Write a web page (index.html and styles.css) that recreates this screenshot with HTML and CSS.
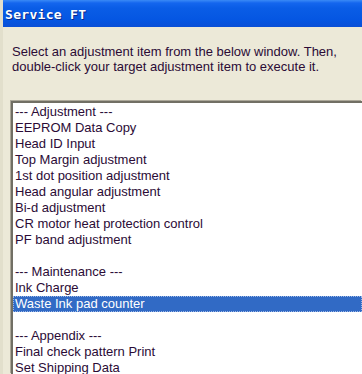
FILE: index.html
```html
<!DOCTYPE html>
<html lang="en">
<head>
  <meta charset="UTF-8" />
  <title>Service FT</title>
  <link rel="stylesheet" href="styles.css">
</head>
<body>

  <div class="titlebar">Service FT</div>

  <div class="content">
    <p class="hint">Select an adjustment item from the below window. Then,<br>double-click your target adjustment item to execute it.</p>

    <ul class="listbox">
      <li>--- Adjustment ---</li>
      <li>EEPROM Data Copy</li>
      <li>Head ID Input</li>
      <li>Top Margin adjustment</li>
      <li>1st dot position adjustment</li>
      <li>Head angular adjustment</li>
      <li>Bi-d adjustment</li>
      <li>CR motor heat protection control</li>
      <li>PF band adjustment</li>
      <li>&nbsp;</li>
      <li>--- Maintenance ---</li>
      <li>Ink Charge</li>
      <li class="selected">Waste Ink pad counter</li>
      <li>&nbsp;</li>
      <li>--- Appendix ---</li>
      <li>Final check pattern Print</li>
      <li>Set Shipping Data</li>
    </ul>
  </div>

</body>
</html>
```

FILE: styles.css
```css
html, body {
  margin: 0;
  padding: 0;
  height: 374px;
  overflow: hidden;
}
body {
  background: #ece9d8;
  font-family: "Liberation Sans", Arial, sans-serif;
  font-size: 13px;
  color: #2b0b36;
  border-left: 3px solid #e2dfcc;
}
.titlebar {
  height: 27px;
  margin-left: -3px;
  padding: 1px 0 0 5px;
  box-sizing: border-box;
  display: flex;
  align-items: center;
  background: linear-gradient(#3a8af6 0, #1466ee 3px, #0a5de6 8px, #0556e2 20px, #0a4fd6 27px);
  color: #fff;
  font-family: "DejaVu Sans Mono", monospace;
  font-weight: bold;
  font-size: 13px;
  letter-spacing: 0.3px;
  text-shadow: 1px 1px 0 #0a2a8a;
}
.content {
  padding: 17px 0 0 9px;
}
.hint {
  margin: 0;
  line-height: 15px;
}
.listbox {
  list-style: none;
  margin: 27px 0 0 -1px;
  padding: 1px 0 0 0;
  box-sizing: border-box;
  height: 273px;
  overflow: hidden;
  background: #fff;
  border-top: 2px solid #716f64;
  border-left: 2px solid #716f64;
  box-shadow: -1px -1px 0 #aca899;
}
.listbox li {
  height: 16px;
  line-height: 16px;
  padding-left: 2px;
  white-space: nowrap;
}
.listbox li.selected {
  background: #316ac5;
  color: #fff;
  outline: 1px dotted #9db8e6;
  outline-offset: -1px;
}
```
